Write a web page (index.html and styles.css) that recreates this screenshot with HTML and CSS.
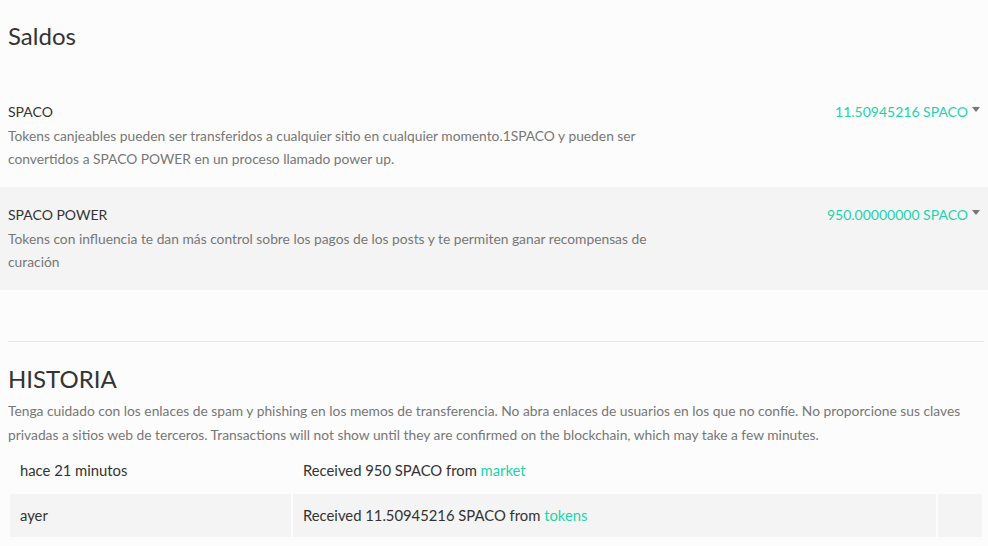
FILE: index.html
```html
<!DOCTYPE html>
<html lang="es">
<head>
<meta charset="utf-8">
<title>Saldos</title>
<link rel="stylesheet" href="styles.css">
</head>
<body>
<main class="wallet">
  <h1 class="page-title">Saldos</h1>

  <section class="balances">
    <div class="balance-row">
      <div class="balance-info">
        <div class="balance-name">SPACO</div>
        <div class="balance-desc">Tokens canjeables pueden ser transferidos a cualquier sitio en cualquier momento.1SPACO y pueden ser convertidos a SPACO POWER en un proceso llamado power up.</div>
      </div>
      <div class="balance-amount">11.50945216 SPACO<span class="caret"></span></div>
    </div>
    <div class="balance-row shaded">
      <div class="balance-info">
        <div class="balance-name">SPACO POWER</div>
        <div class="balance-desc">Tokens con influencia te dan más control sobre los pagos de los posts y te permiten ganar recompensas de curación</div>
      </div>
      <div class="balance-amount">950.00000000 SPACO<span class="caret"></span></div>
    </div>
  </section>

  <hr class="divider">

  <section class="history">
    <h2 class="history-title">HISTORIA</h2>
    <p class="history-note">Tenga cuidado con los enlaces de spam y phishing en los memos de transferencia. No abra enlaces de usuarios en los que no confíe. No proporcione sus claves privadas a sitios web de terceros. Transactions will not show until they are confirmed on the blockchain, which may take a few minutes.</p>
    <table class="history-table">
      <tbody>
        <tr>
          <td class="col-time">hace 21 minutos</td>
          <td class="col-desc">Received 950 SPACO from <a href="#" class="link">market</a></td>
          <td class="col-memo"></td>
        </tr>
        <tr class="striped">
          <td class="col-time">ayer</td>
          <td class="col-desc">Received 11.50945216 SPACO from <a href="#" class="link">tokens</a></td>
          <td class="col-memo"></td>
        </tr>
      </tbody>
    </table>
  </section>
</main>
</body>
</html>
```

FILE: styles.css
```css
html, body {
  margin: 0;
  padding: 0;
  background: #fcfcfc;
}
body {
  font-family: "Lato", "Source Sans Pro", "Noto Sans", sans-serif;
  color: #333;
  font-size: 14px;
}
.wallet {
  padding: 0 4px 0 8px;
}
.page-title {
  margin: 0;
  padding-top: 21px;
  font-size: 24px;
  font-weight: 400;
  line-height: 30px;
  color: #333;
}
.balances {
  margin: 33px -4px 0 -8px;
}
.balance-row {
  display: flex;
  justify-content: space-between;
  align-items: flex-start;
  padding: 16px 8px 17px 8px;
}
.balance-row.shaded {
  background: #f4f4f4;
}
.balance-info {
  width: 660px;
}
.balance-name {
  font-size: 14px;
  line-height: 24px;
  color: #333;
}
.balance-desc {
  font-size: 13.8px;
  line-height: 23px;
  color: #777;
}
.balance-amount {
  font-size: 14px;
  line-height: 24px;
  color: #1dd3ab;
  display: flex;
  align-items: center;
}
.caret {
  display: inline-block;
  margin-left: 4px;
  width: 0;
  height: 0;
  border-left: 4.5px solid transparent;
  border-right: 4.5px solid transparent;
  border-top: 5px solid #777;
  position: relative;
  top: -3px;
}
.divider {
  margin: 51px 0 0 0;
  border: 0;
  border-top: 1px solid #e8e8e8;
}
.history-title {
  margin: 22px 0 0 0;
  font-size: 24px;
  font-weight: 400;
  line-height: 30px;
  color: #333;
}
.history-note {
  margin: 5px 0 0 0;
  font-size: 13.8px;
  line-height: 24px;
  color: #777;
}
.history-table {
  width: 100%;
  border-collapse: separate;
  border-spacing: 2px;
}
.history-table td {
  padding: 10px 10px;
  font-size: 14.8px;
  line-height: 23px;
  color: #333;
  height: 23px;
}
.history-table .striped td {
  background: #f4f4f4;
}
.col-time {
  width: 261px;
}
.col-memo {
  width: 24px;
}
.link {
  color: #1dd3ab;
  text-decoration: none;
}
```
